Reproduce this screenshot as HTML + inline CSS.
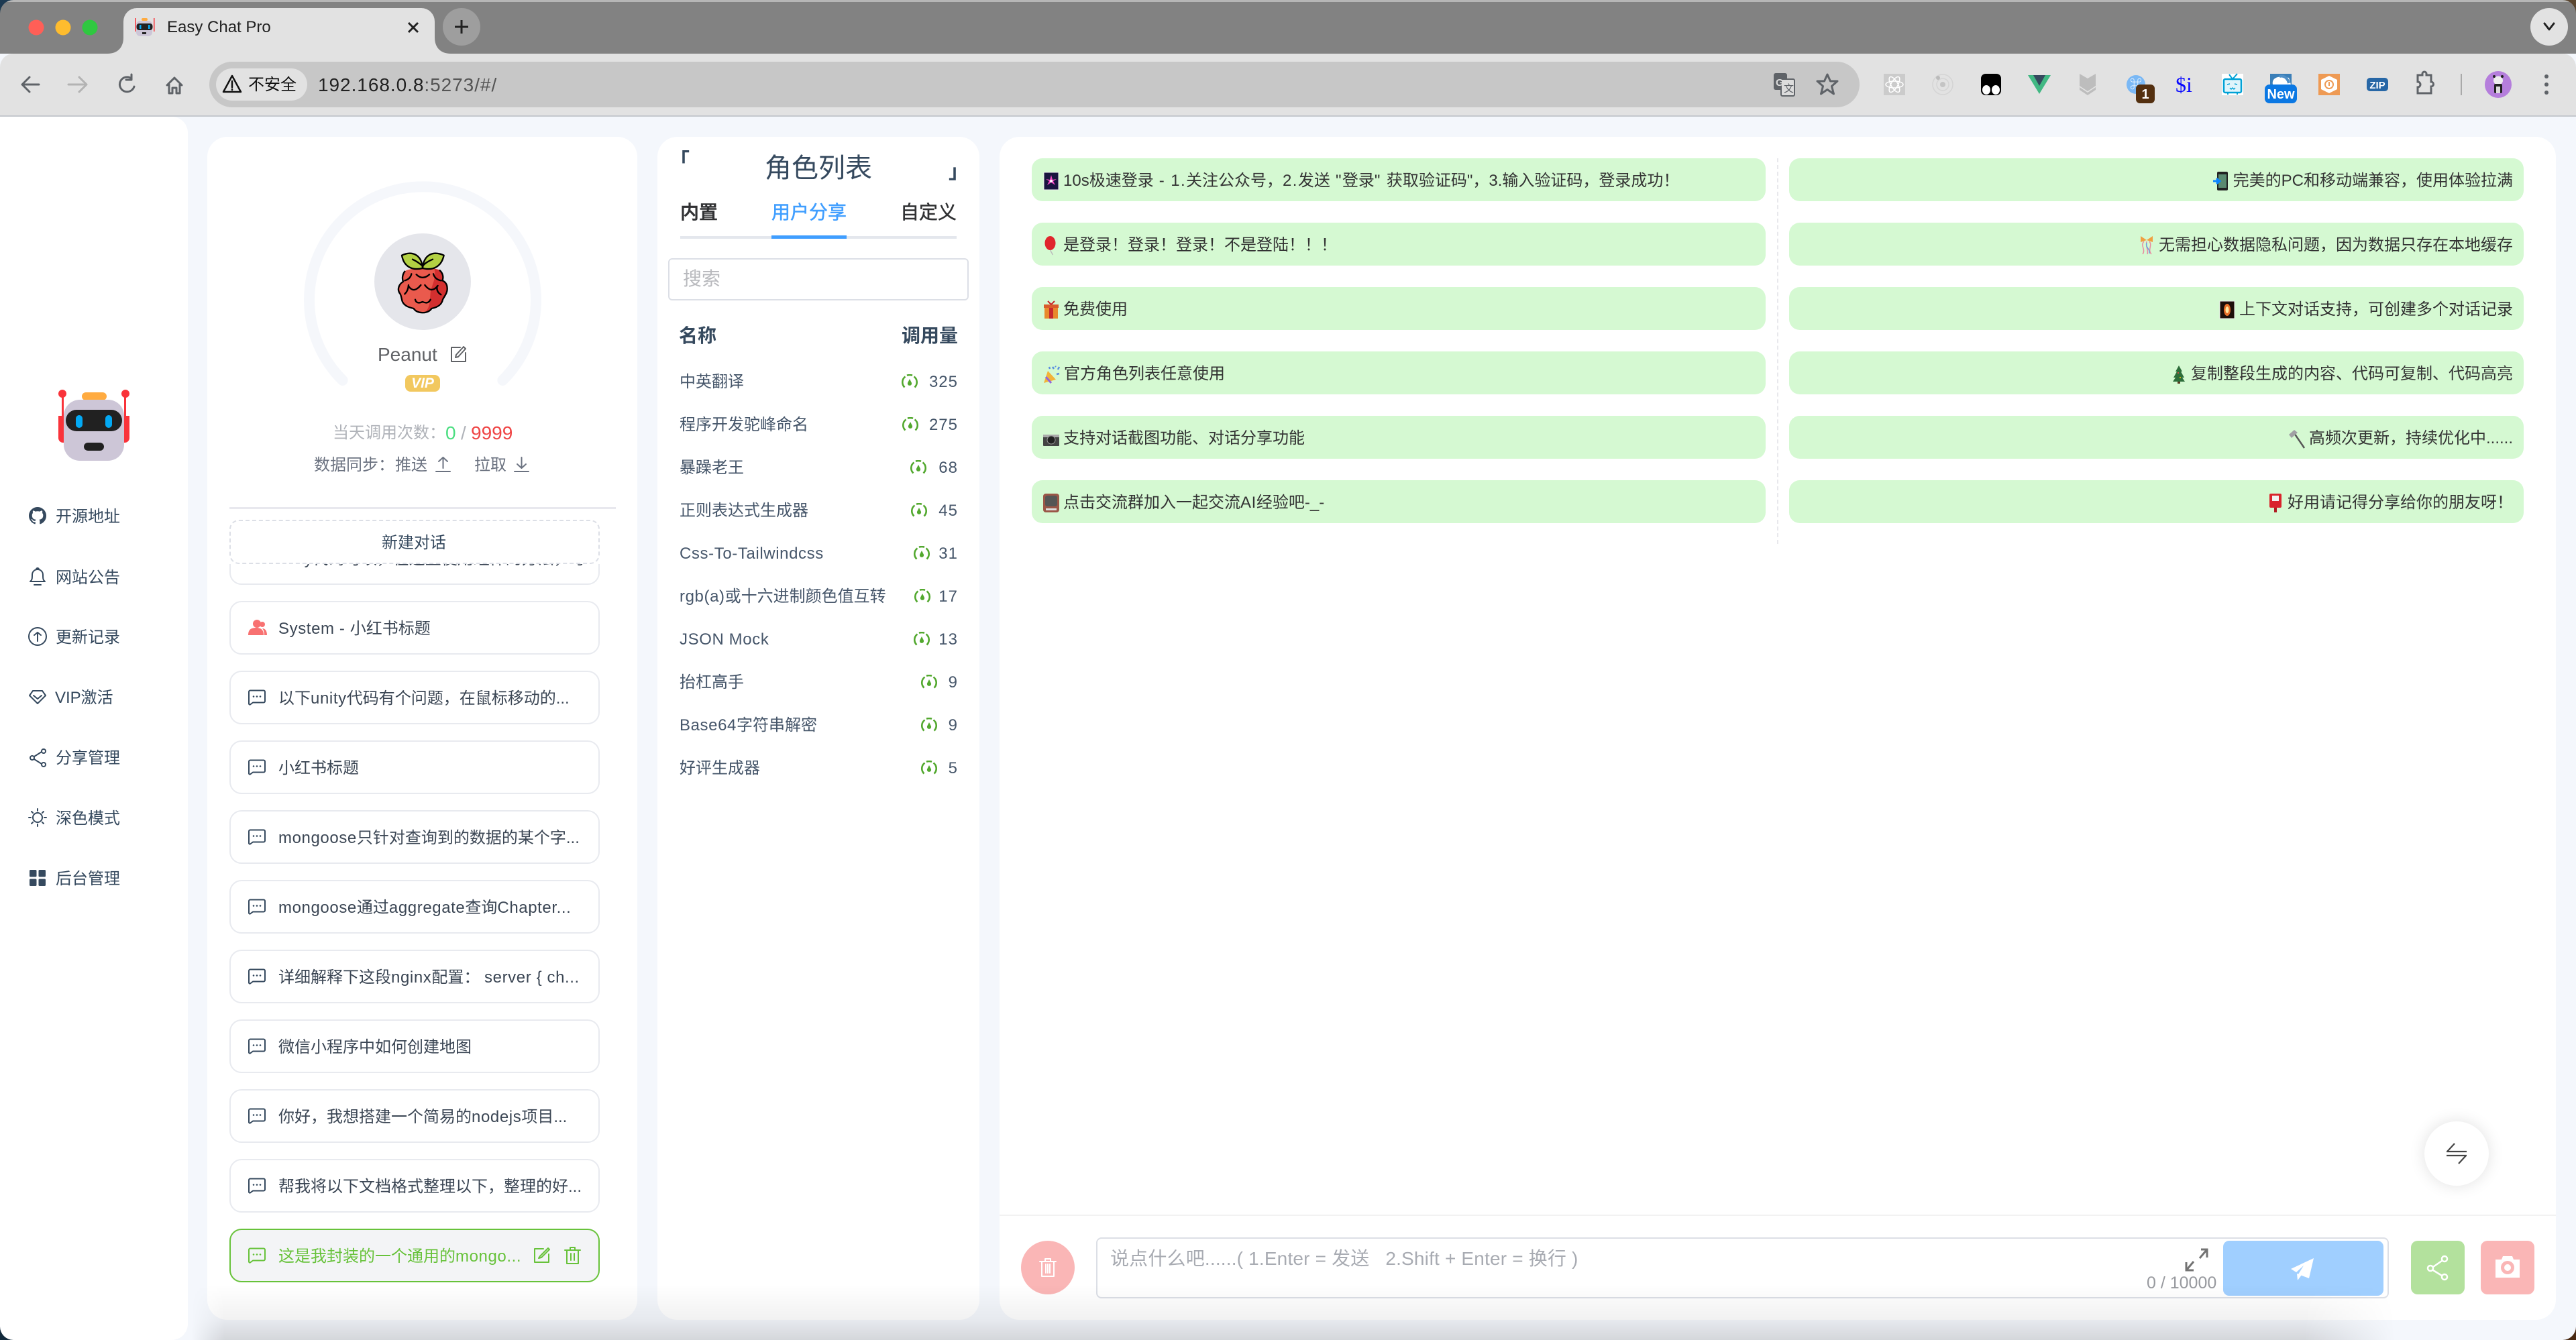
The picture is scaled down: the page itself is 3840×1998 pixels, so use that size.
<!DOCTYPE html>
<html lang="zh-CN"><head><meta charset="utf-8"><title>Easy Chat Pro</title>
<style>
*{box-sizing:border-box;margin:0;padding:0}
html,body{width:3840px;height:1998px;overflow:hidden;background:#f4f7fc;font-family:"Liberation Sans","Noto Sans CJK SC",sans-serif;color:#35495e}
.a{position:absolute}
.t{position:absolute;white-space:pre;line-height:40px;height:40px;padding-top:2px}
svg{display:block;overflow:visible}
.i{position:absolute;fill:none;stroke:currentColor;stroke-width:2;stroke-linecap:round;stroke-linejoin:round}
.nav{font-size:24px;color:#35495e;left:83px}
.e{letter-spacing:.6px}
.item{position:absolute;left:342px;width:552px;height:80px;border:2px solid #e8eaef;border-radius:18px;background:#fff;font-size:24px;color:#3b4654;line-height:80px;white-space:pre;padding-left:71px}
.item svg{position:absolute;left:26px;top:26px;color:#35495e}
.item.on{border-color:#67c23a;background:#f3f4f6;color:#67c23a}
.item.on svg{color:#67c23a}
.row{position:absolute;left:1013px;width:414px;height:40px;line-height:44px;font-size:24px;color:#46566a;white-space:pre}
.row b{position:absolute;right:-1px;top:0;font-weight:400;letter-spacing:1px}
.row svg{position:absolute;top:10px}
.n{position:absolute;height:64px;border-radius:16px;background:#d5f9d2;font-size:24px;color:#333;line-height:60px;padding-top:4px;white-space:pre;display:flex;align-items:center}
.l{left:1538px;width:1094px;padding-left:17px}
.r{left:2667px;width:1095px;justify-content:flex-end;padding-right:16px}
.n svg{flex:none;margin-right:6px}
.q{letter-spacing:1.4px}
</style></head><body>

<svg width="0" height="0" style="position:absolute"><defs>
<symbol id="chat" viewBox="0 0 26 24"><path d="M3 1.5h20a2 2 0 0 1 2 2v14a2 2 0 0 1-2 2H7l-4 3a1.5 1.5 0 0 1-2-1V3.5a2 2 0 0 1 2-2z" fill="none" stroke="currentColor" stroke-width="2" stroke-linejoin="round"/><circle cx="8" cy="10.5" r="1.3" fill="currentColor"/><circle cx="13" cy="10.5" r="1.3" fill="currentColor"/><circle cx="18" cy="10.5" r="1.3" fill="currentColor"/></symbol>
<symbol id="gauge" viewBox="0 0 24 21"><g fill="none" stroke="#52a82e" stroke-width="2.6"><path d="M4.500 19.500A10.500 10.500 0 0 1 5.500 3.500"/><path d="M19.500 19.500A10.500 10.500 0 0 0 18.500 3.500"/><path d="M8 1.800a11 11 0 0 1 8 0"/></g><path d="M12 7l2.800 5.500a3.100 3.100 0 1 1-5.600 0z" fill="#52a82e"/></symbol>
</defs></svg>

<!-- Browser chrome -->
<div class="a" style="left:0;top:0;width:3840px;height:80px;background:#828282"></div>
<div class="a" style="left:0;top:0;width:3840px;height:3px;background:#b6b6b6"></div>
<div class="a" style="left:0;top:80px;width:3840px;height:92px;background:#e2e2e2;border-radius:20px 20px 0 0"></div>
<div class="a" style="left:0;top:172px;width:3840px;height:2px;background:#c4c8cd"></div>
<svg class="a" style="left:0;top:0" width="800" height="90"><path d="M160 80C176 80 184 70 184 56V32A20 20 0 0 1 204 12H628A20 20 0 0 1 648 32V56C648 70 656 80 672 80V90H160Z" fill="#e2e2e2"/>
<circle cx="54" cy="41" r="11.5" fill="#ff5f57"/><circle cx="94" cy="41" r="11.5" fill="#febc2e"/><circle cx="134" cy="41" r="11.5" fill="#2fc840"/>
<circle cx="688" cy="40" r="28" fill="#9e9e9e"/><path d="M678 40h20M688 30v20" stroke="#222" stroke-width="3"/>
<path d="M609 34l14 14M623 34l-14 14" stroke="#222" stroke-width="3"/>
<g><rect x="203" y="31" width="24" height="23" rx="6" fill="#cdc6d7"/><rect x="211" y="27" width="9" height="4" rx="2" fill="#ffab40"/><rect x="203.500" y="35" width="24" height="10" rx="4" fill="#212121"/><rect x="208" y="37" width="2.500" height="6" fill="#03a9f4"/><rect x="221" y="37" width="2.500" height="6" fill="#03a9f4"/><rect x="212" y="48" width="6" height="3" fill="#222"/><rect x="201" y="27" width="1.500" height="20" fill="#f9333a"/><rect x="229" y="27" width="1.500" height="20" fill="#f9333a"/></g></svg>
<div class="t" style="left:249px;top:19px;font-size:24px;color:#222">Easy Chat Pro</div>

<svg class="a i" style="left:30px;top:108px;color:#5f6368;stroke-width:3" width="270" height="40"><path d="M4 18H28M14 7L3 18l11 11"/><path d="M72 18H98M88 7l11 11-11 11" stroke="#b3b3b3"/><path d="M166 9a11 11 0 1 0 4 12M166 3v8h-8"/><path d="M219 19l11-11 11 11M222 17v14h5v-8h6v8h5V17"/></svg>
<div class="a" style="left:312px;top:92px;width:2460px;height:68px;border-radius:34px;background:#c7c7c7"></div>
<div class="a" style="left:322px;top:102px;width:136px;height:48px;border-radius:24px;background:#e2e2e2"></div>
<svg class="a i" style="left:331px;top:110px;color:#111;stroke-width:2.500" width="30" height="30"><path d="M15 3L28 27H2Z"/><path d="M15 11v9M15 23v1"/></svg>
<div class="t" style="left:370px;top:105px;font-size:24px;color:#111">不安全</div>
<div class="t" style="left:474px;top:105px;font-size:28px;letter-spacing:.95px;color:#222">192.168.0.8<span style="color:#555">:5273/#/</span></div>

<svg class="a" style="left:2640px;top:104px" width="110" height="44"><rect x="4" y="5" width="20" height="25" rx="3" fill="#5f6368"/><rect x="15" y="14" width="20" height="25" rx="2" fill="#dcdcdc" stroke="#5f6368" stroke-width="2"/><text x="7" y="24" font-size="15" font-weight="700" fill="#ddd" font-family="Liberation Sans">G</text><text x="19" y="33" font-size="15" fill="#5f6368" font-family="Liberation Sans">文</text><path d="M84 7l4.500 10h10.500l-8.500 7.500 3 11.500-9.500-6.500-9.500 6.500 3-11.500L69 17h10.500Z" fill="#c6c6c6" stroke="#5f6368" stroke-width="3" stroke-linejoin="round"/></svg>

<svg class="a" style="left:2800px;top:100px" width="1030" height="60">
<rect x="8" y="10" width="32" height="32" fill="#cbcbcb"/><g fill="none" stroke="#fff" stroke-width="1.500"><ellipse cx="24" cy="26" rx="13" ry="5"/><ellipse cx="24" cy="26" rx="13" ry="5" transform="rotate(60 24 26)"/><ellipse cx="24" cy="26" rx="13" ry="5" transform="rotate(120 24 26)"/></g>
<g fill="none" stroke="#d4d4d4" stroke-width="1.500"><circle cx="96" cy="26" r="15"/><circle cx="96" cy="26" r="9"/></g><circle cx="96" cy="26" r="4" fill="#c4c4c4"/><circle cx="89" cy="16" r="3" fill="#bbb"/>
<rect x="153" y="10" width="30" height="32" rx="7" fill="#000"/><ellipse cx="161" cy="34" rx="6" ry="7" fill="#fff"/><ellipse cx="175" cy="34" rx="6" ry="7" fill="#fff"/>
<path d="M223 12h34l-17 28Z" fill="#41b883"/><path d="M231 12h18l-9 16Z" fill="#35495e"/>
<path d="M300 10l12 7 12-7v18l-12 8-12-8Z" fill="#bdbdbd"/><path d="M300 30l12 8 12-8v4l-12 8-12-8Z" fill="#bdbdbd"/>
<circle cx="384" cy="26" r="14" fill="#7ab8f5"/><text x="375" y="32" font-size="18" fill="#fff" font-family="Liberation Sans">⌘</text>
<rect x="384" y="26" width="28" height="28" rx="6" fill="#532f0f"/><text x="398" y="47" text-anchor="middle" font-size="20" font-weight="700" fill="#fff" font-family="Liberation Sans">1</text>
<text x="443" y="37" font-size="32" fill="#0a0aff" font-family="Liberation Serif">$i</text>
<rect x="512" y="10" width="32" height="32" fill="#fff"/><rect x="515" y="18" width="26" height="20" rx="2" fill="#dff4fb" stroke="#00a1d6" stroke-width="2.500"/><path d="M523 11l5 7 7-8M520 40h2M534 40h2" stroke="#00a1d6" stroke-width="2" fill="none"/><path d="M520 26l4-1M535 26l-4-1M524 31l2 2 2-2 2 2 2-2" stroke="#00a1d6" stroke-width="1.500" fill="none"/>
<rect x="584" y="10" width="32" height="18" fill="#3b7fb8"/><path d="M588 26c-2-10 8-14 24-10l3 10Z" fill="#fff"/><path d="M598 14c6-2 12 2 14 10" stroke="#4f8fc7" stroke-width="4" fill="none"/>
<rect x="576" y="26" width="48" height="28" rx="7" fill="#0b78e3"/><text x="600" y="47" text-anchor="middle" font-size="20" font-weight="700" fill="#fff" font-family="Liberation Sans">New</text>
<rect x="656" y="10" width="32" height="32" fill="#ee9a54"/><path d="M672 13l12 6v14l-12 6-12-6V19Z" fill="#fff"/><circle cx="672" cy="26" r="6" fill="none" stroke="#ee9a54" stroke-width="2"/><path d="M672 22v6" stroke="#ee9a54" stroke-width="2"/>
<rect x="728" y="16" width="32" height="20" rx="5" fill="#2767a6"/><text x="744" y="32" text-anchor="middle" font-size="15" font-weight="700" fill="#fff" font-family="Liberation Sans">ZIP</text>
<path d="M804 12h7v-2a3 3 0 0 1 6 0v2h7v10a3.500 3.500 0 0 1 0 7v10h-20v-9a3.500 3.500 0 0 0 0-8Z" fill="none" stroke="#5f6368" stroke-width="3"/>
<rect x="868" y="10" width="2" height="32" fill="#a9a9a9"/>
<circle cx="924" cy="26" r="20" fill="#b57edc"/><ellipse cx="924" cy="20" rx="7" ry="6.500" fill="#eee"/><circle cx="918" cy="14" r="2" fill="#222"/><circle cx="930" cy="14" r="2" fill="#222"/><rect x="918" y="25" width="12" height="14" rx="2" fill="#222"/><rect x="921" y="29" width="6" height="10" fill="#ddd"/>
<circle cx="996" cy="14" r="3" fill="#5f6368"/><circle cx="996" cy="26" r="3" fill="#5f6368"/><circle cx="996" cy="38" r="3" fill="#5f6368"/>
</svg>
<div class="a" style="left:3772px;top:12px;width:56px;height:56px;border-radius:28px;background:#e2e2e2"></div>
<svg class="a i" style="left:3790px;top:32px;color:#222;stroke-width:3" width="20" height="16"><path d="M3 3l7 9 7-9"/></svg>

<!-- Left nav -->
<div class="a" style="left:0;top:174px;width:280px;height:1824px;background:#fff;border-radius:0 24px 24px 0"></div>
<svg class="a" style="left:80px;top:575px" width="120" height="120">
<path d="M7 45h8v40H14a7 7 0 0 1-7-7ZM113 45h-8v40h1a7 7 0 0 0 7-7Z" fill="#f9333a"/><rect x="12" y="10" width="3" height="40" fill="#f9333a"/><rect x="105" y="10" width="3" height="40" fill="#f9333a"/><circle cx="13" cy="12" r="6" fill="#f9333a"/><circle cx="107" cy="12" r="6" fill="#f9333a"/>
<rect x="42" y="10" width="37" height="12" rx="6" fill="#ffab40"/><rect x="15" y="21" width="90" height="91" rx="24" fill="#cdc6d7"/><rect x="18" y="36" width="84" height="32" rx="16" fill="#212121"/><rect x="33" y="44" width="10" height="19" rx="5" fill="#03a9f4"/><rect x="77" y="44" width="10" height="19" rx="5" fill="#03a9f4"/><rect x="45" y="85" width="30" height="12" rx="6" fill="#212121"/></svg>

<svg class="a" style="left:43px;top:756px;color:#35495e;fill:currentColor" width="26" height="26" viewBox="0 0 16 16"><path d="M8 0C3.58 0 0 3.58 0 8c0 3.54 2.29 6.53 5.47 7.59.4.07.55-.17.55-.38 0-.19-.01-.82-.01-1.49-2.01.37-2.53-.49-2.69-.94-.09-.23-.48-.94-.82-1.13-.28-.15-.68-.52-.01-.53.63-.01 1.08.58 1.23.82.72 1.21 1.87.87 2.33.66.07-.52.28-.87.51-1.07-1.78-.2-3.64-.89-3.64-3.95 0-.87.31-1.59.82-2.15-.08-.2-.36-1.02.08-2.12 0 0 .67-.21 2.2.82.64-.18 1.32-.27 2-.27.68 0 1.36.09 2 .27 1.53-1.04 2.2-.82 2.2-.82.44 1.1.16 1.92.08 2.12.51.56.82 1.27.82 2.15 0 3.07-1.87 3.75-3.65 3.95.29.25.54.73.54 1.48 0 1.07-.01 1.93-.01 2.2 0 .21.15.46.55.38A8.013 8.013 0 0 0 16 8c0-4.42-3.58-8-8-8z"/></svg>
<div class="t nav" style="top:749px">开源地址</div>
<svg class="i" style="left:43px;top:846px;color:#35495e" width="26" height="28"><path d="M2 21c3-2 3-5 3-10a8 8 0 0 1 16 0c0 5 0 8 3 10ZM11 3a2 2 0 0 1 4 0M8 26h10"/></svg>
<div class="t nav" style="top:840px">网站公告</div>
<svg class="i" style="left:42px;top:936px;color:#35495e" width="28" height="26"><circle cx="14" cy="13" r="13"/><path d="M14 20V7M9 11l5-4 5 4"/></svg>
<div class="t nav" style="top:929px">更新记录</div>
<svg class="i" style="left:43px;top:1029px;color:#35495e" width="26" height="22"><path d="M6 1h14l5 7-12 12L1 8ZM7 8l6 5 6-5"/></svg>
<div class="t nav" style="top:1019px;left:82px">VIP激活</div>
<svg class="i" style="left:44px;top:1116px;color:#35495e" width="26" height="28"><circle cx="4" cy="14" r="3"/><circle cx="21" cy="4" r="3"/><circle cx="21" cy="24" r="3"/><path d="M7 12l11-7M7 16l11 7"/></svg>
<div class="t nav" style="top:1109px">分享管理</div>
<svg class="i" style="left:42px;top:1205px;color:#35495e" width="28" height="28"><circle cx="14" cy="14" r="7"/><path d="M14 1v3M14 24v3M1 14h3M24 14h3M5 5l2 2M21 21l2 2M5 23l2-2M21 7l2-2"/></svg>
<div class="t nav" style="top:1199px">深色模式</div>
<svg class="a" style="left:44px;top:1297px" width="24" height="24" fill="#35495e"><rect width="10.500" height="10.500" rx="1.500"/><rect x="13.500" width="10.500" height="10.500" rx="1.500"/><rect y="13.500" width="10.500" height="10.500" rx="1.500"/><rect x="13.500" y="13.500" width="10.500" height="10.500" rx="1.500"/></svg>
<div class="t nav" style="top:1289px">后台管理</div>

<!-- Left card -->
<div class="a" style="left:309px;top:204px;width:641px;height:1764px;background:#fff;border-radius:30px"></div>
<svg class="a" style="left:400px;top:250px" width="460" height="360" viewBox="0 0 1380 1080">
<path d="M332 951A507 507 0 1 1 1048 951" fill="none" stroke="#f5f7fb" stroke-width="48" stroke-linecap="round"/>
<circle cx="690" cy="510" r="216" fill="#e5e6eb"/>
<clipPath id="rb"><path d="M612 462C600 475 597 495 603 510C585 520 573 545 590 565C595 575 596 590 600 600C610 620 630 625 650 630C665 655 715 655 730 630C755 625 775 615 780 590C785 578 802 560 800 540C800 520 790 510 778 505C785 490 780 470 765 458C740 445 640 445 612 462Z"/></clipPath>
<path d="M612 462C600 475 597 495 603 510C585 520 573 545 590 565C595 575 596 590 600 600C610 620 630 625 650 630C665 655 715 655 730 630C755 625 775 615 780 590C785 578 802 560 800 540C800 520 790 510 778 505C785 490 780 470 765 458C740 445 640 445 612 462Z" fill="#ea5a4d"/>
<path d="M740 440C755 500 730 520 725 560C722 600 725 620 700 650H810V440Z" fill="#d32f2f" clip-path="url(#rb)"/>
<path d="M612 462C600 475 597 495 603 510C585 520 573 545 590 565C595 575 596 590 600 600C610 620 630 625 650 630C665 655 715 655 730 630C755 625 775 615 780 590C785 578 802 560 800 540C800 520 790 510 778 505C785 490 780 470 765 458" fill="none" stroke="#000" stroke-width="7"/>
<g fill="none" stroke="#000" stroke-width="7" stroke-linecap="round"><path d="M662 478Q690 505 720 478M610 505Q635 498 640 475M738 475Q745 500 772 505M627 525Q625 552 610 565M627 530Q650 565 682 525M700 525Q730 565 758 528M755 530Q750 555 772 568M657 590Q662 612 690 600Q715 612 725 590"/></g>
<path d="M690 450C640 462 605 440 597 392C640 372 685 385 690 450Z" fill="#b3d143" stroke="#000" stroke-width="7" stroke-linejoin="round"/><path d="M690 450C740 462 775 440 785 392C740 372 695 385 690 450Z" fill="#b3d143" stroke="#000" stroke-width="7" stroke-linejoin="round"/>
<path d="M645 410Q670 422 690 440M735 410Q705 422 690 440" fill="none" stroke="#000" stroke-width="7" stroke-linecap="round"/>
</svg>
<div class="t" style="left:563px;top:507px;font-size:28px;color:#606266">Peanut</div>
<svg class="i" style="left:671px;top:515px;color:#606266" width="26" height="26"><path d="M15 3H2v21h21V11M9 14L20 2l3 3-11 12-4 1Z"/></svg>
<div class="a" style="left:604px;top:559px;width:52px;height:25px;border-radius:8px;background:#f2c85f;color:#fff;font:italic 700 21px/25px 'Liberation Sans';text-align:center">VIP</div>

<div class="t" style="left:496px;top:624px;font-size:24px;color:#b0b3b9">当天调用次数：</div>
<div class="t" style="left:664px;top:624px;font-size:28px;color:#4ade80">0</div>
<div class="t" style="left:687px;top:624px;font-size:28px;color:#b0b3b9">/</div>
<div class="t" style="left:702px;top:624px;font-size:28px;color:#ef4444">9999</div>
<div class="t" style="left:468px;top:672px;font-size:24px;color:#6b7280">数据同步：</div>
<div class="t" style="left:589px;top:672px;font-size:24px;color:#6b7280">推送</div>
<div class="t" style="left:707px;top:672px;font-size:24px;color:#6b7280">拉取</div>
<svg class="i" style="left:649px;top:680px;color:#6b7280" width="24" height="24"><path d="M1 23h21M11.500 18V2M5 8l6.500-6L18 8"/></svg>
<svg class="i" style="left:766px;top:680px;color:#6b7280" width="24" height="24"><path d="M1 23h21M11.500 2v16M5 12l6.500 6L18 12"/></svg>
<div class="a" style="left:342px;top:756px;width:576px;height:3px;background:#e8e8ee"></div>

<div class="a" style="left:309px;top:841px;width:641px;height:40px;overflow:hidden"><div class="item" style="left:33px;top:-49px">unity代码可以，在这里使用组件的方法，写...</div></div>
<div class="a" style="left:342px;top:775px;width:552px;height:66px;border:2px dashed #dcdfe6;border-radius:14px;background:#fff;text-align:center;font-size:24px;line-height:66px;color:#35495e;padding-right:2px">新建对话</div>

<div class="item" style="top:896px"><svg width="28" height="24" class="a" style="left:26px;top:26px" fill="#f87171"><circle cx="13" cy="6" r="6"/><circle cx="21" cy="7" r="4"/><path d="M0 23c0-9 5-11 12-11s11 3 11 11Z"/><path d="M21 13c4 0 7 3 7 10h-4c0-4-1-8-3-10Z"/></svg><span class="e">System - </span>小红书标题</div>
<div class="item" style="top:1000px"><svg width="26" height="24"><use href="#chat"/></svg>以下<span class="e">unity</span>代码有个问题，在鼠标移动的...</div>
<div class="item" style="top:1104px"><svg width="26" height="24"><use href="#chat"/></svg>小红书标题</div>
<div class="item" style="top:1208px"><svg width="26" height="24"><use href="#chat"/></svg><span class="e">mongoose</span>只针对查询到的数据的某个字...</div>
<div class="item" style="top:1312px"><svg width="26" height="24"><use href="#chat"/></svg><span class="e">mongoose</span>通过<span class="e">aggregate</span>查询<span class="e">Chapter...</span></div>
<div class="item" style="top:1416px"><svg width="26" height="24"><use href="#chat"/></svg>详细解释下这段<span class="e">nginx</span>配置： <span class="e">server { ch...</span></div>
<div class="item" style="top:1520px"><svg width="26" height="24"><use href="#chat"/></svg>微信小程序中如何创建地图</div>
<div class="item" style="top:1624px"><svg width="26" height="24"><use href="#chat"/></svg>你好，我想搭建一个简易的<span class="e">nodejs</span>项目...</div>
<div class="item" style="top:1728px"><svg width="26" height="24"><use href="#chat"/></svg>帮我将以下文档格式整理以下，整理的好...</div>
<div class="item on" style="top:1832px"><svg width="26" height="24"><use href="#chat"/></svg>这是我封装的一个通用的<span class="e">mongo...</span>
<svg class="i" style="left:451px;top:25px;color:#67c23a;stroke-width:2" width="26" height="26"><path d="M15 3H2v20h21V11M10 14L22 2l2 2-12 12-4 1Z"/></svg>
<svg class="i" style="left:497px;top:25px;color:#67c23a;stroke-width:2" width="26" height="26"><path d="M1 5h23M4 5v20h17V5M9 5V1h7v4M10 10v10M15 10v10"/></svg></div>

<!-- Middle card -->
<div class="a" style="left:980px;top:204px;width:480px;height:1764px;background:#fff;border-radius:30px"></div>
<div class="t" style="left:998px;top:219px;font-size:30px;line-height:40px;color:#35495e;font-weight:700">「</div>
<div class="t" style="left:1414px;top:235px;font-size:30px;line-height:40px;color:#35495e;font-weight:700">」</div>
<div class="t" style="left:1140px;top:225px;font-size:40px;line-height:48px;height:48px;color:#35495e">角色列表</div>
<div class="t" style="left:1014px;top:295px;font-size:28px;font-weight:500;color:#303133;-webkit-text-stroke:.5px #303133">内置</div>
<div class="t" style="left:1150px;top:295px;font-size:28px;color:#409eff;-webkit-text-stroke:.5px #409eff">用户分享</div>
<div class="t" style="left:1342px;top:295px;font-size:28px;color:#303133;-webkit-text-stroke:.5px #303133">自定义</div>
<div class="a" style="left:1014px;top:352px;width:412px;height:4px;background:#e4e7ed"></div>
<div class="a" style="left:1150px;top:351px;width:112px;height:5px;background:#409eff"></div>
<div class="a" style="left:996px;top:385px;width:448px;height:63px;border:2px solid #dcdfe6;border-radius:6px;background:#fff"></div>
<div class="t" style="left:1018px;top:394px;font-size:28px;color:#b8b9bd">搜索</div>
<div class="t" style="left:1012px;top:479px;font-size:28px;font-weight:700;color:#35495e">名称</div>
<div class="t" style="left:1344px;top:479px;font-size:28px;font-weight:700;color:#35495e">调用量</div>

<div class="row" style="top:548px">中英翻译<svg width="24" height="21" style="left:331px"><use href="#gauge"/></svg><b>325</b></div>
<div class="row" style="top:612px">程序开发驼峰命名<svg width="24" height="21" style="left:332px"><use href="#gauge"/></svg><b>275</b></div>
<div class="row" style="top:676px">暴躁老王<svg width="24" height="21" style="left:344px"><use href="#gauge"/></svg><b>68</b></div>
<div class="row" style="top:740px">正则表达式生成器<svg width="24" height="21" style="left:345px"><use href="#gauge"/></svg><b>45</b></div>
<div class="row" style="top:804px"><span class="e">Css-To-Tailwindcss</span><svg width="24" height="21" style="left:349px"><use href="#gauge"/></svg><b>31</b></div>
<div class="row" style="top:868px"><span class="e">rgb(a)</span>或十六进制颜色值互转<svg width="24" height="21" style="left:350px"><use href="#gauge"/></svg><b>17</b></div>
<div class="row" style="top:932px"><span class="e">JSON Mock</span><svg width="24" height="21" style="left:349px"><use href="#gauge"/></svg><b>13</b></div>
<div class="row" style="top:996px">抬杠高手<svg width="24" height="21" style="left:360px"><use href="#gauge"/></svg><b>9</b></div>
<div class="row" style="top:1060px"><span class="e">Base64</span>字符串解密<svg width="24" height="21" style="left:360px"><use href="#gauge"/></svg><b>9</b></div>
<div class="row" style="top:1124px">好评生成器<svg width="24" height="21" style="left:360px"><use href="#gauge"/></svg><b>5</b></div>

<!-- Right card -->
<div class="a" style="left:1490px;top:204px;width:2320px;height:1764px;background:#fff;border-radius:30px"></div>
<div class="a" style="left:2649px;top:236px;height:575px;border-left:2px dashed #e8e8ec"></div>

<div class="n l" style="top:236px"><svg width="24" height="28"><rect x="1" y="1" width="22" height="26" fill="#1a1440" stroke="#eee"/><path d="M12 5l2 7 6-1-5 3 3 6-6-4-6 4 3-6-5-3 6 1Z" fill="#f24ac4"/><circle cx="12" cy="14" r="2" fill="#fff"/></svg><span>10s极速登录<span class="q"> - 1.</span>关注公众号，<span class="q">2.</span>发送<span class="q"> "</span>登录<span class="q">" </span>获取验证码"，3.输入验证码，登录成功！</span></div>
<div class="n l" style="top:332px"><svg width="24" height="28"><ellipse cx="10.500" cy="10.500" rx="8" ry="10.500" fill="#e0252c"/><path d="M10.500 21l4 7" stroke="#bbb" stroke-width="1.500"/></svg>是登录！登录！登录！不是登陆！！！</div>
<div class="n l" style="top:428px"><svg width="24" height="28"><rect x="2" y="8" width="20" height="19" fill="#e8892c"/><rect x="9" y="8" width="6" height="19" fill="#c7282d"/><rect x="1" y="6" width="22" height="5" fill="#d95b2b"/><path d="M12 6L7 1M12 6l5-5" stroke="#c7282d" stroke-width="2"/></svg>免费使用</div>
<div class="n l" style="top:524px"><svg width="24" height="28" style="margin-right:7px"><path d="M1 27l6-18 12 13Z" fill="#f2b33a"/><path d="M4 18l8 9" stroke="#9467d8" stroke-width="3"/><path d="M14 3l2 3M22 7l2-4M20 14l4-1M18 2l1 1M9 3l1 3" stroke="#5a8fe0" stroke-width="2.500"/></svg>官方角色列表任意使用</div>
<div class="n l" style="top:620px"><svg width="24" height="28"><rect x="0" y="8" width="24" height="17" rx="1" fill="#444"/><rect x="0" y="8" width="24" height="4" fill="#aaa"/><circle cx="12" cy="16" r="6" fill="#222" stroke="#999"/></svg>支持对话截图功能、对话分享功能</div>
<div class="n l" style="top:716px"><svg width="24" height="28"><rect x="0" y="0" width="24" height="28" rx="4" fill="#9a5647"/><rect x="3" y="3" width="18" height="16" rx="3" fill="#555"/><rect x="4" y="22" width="16" height="3" fill="#ddd"/></svg>点击交流群加入一起交流<span class="e">AI</span>经验吧-_-</div>

<div class="n r" style="top:236px"><svg width="24" height="28"><rect x="6" y="0" width="16" height="28" rx="2" fill="#222"/><rect x="8" y="4" width="12" height="20" fill="#5a8a70"/><path d="M0 14h8M5 10l5 4-5 4" stroke="#0a84ff" stroke-width="3" fill="#0a84ff"/></svg>完美的PC和移动端兼容，使用体验拉满</div>
<div class="n r" style="top:332px"><svg width="24" height="28"><path d="M12 6L3 0v9ZM12 6l9-6v9Z" fill="#f0a040"/><path d="M8 8c-6 6 3 12-2 19M12 8c-2 8 3 12 1 19M16 8c5 6-3 12 3 19" stroke="#e88aa0" stroke-width="1.500" fill="none"/><path d="M12 10c-2 8 5 8 4 16" stroke="#6aa0e0" stroke-width="1.500" fill="none"/></svg>无需担心数据隐私问题，因为数据只存在本地缓存</div>
<div class="n r" style="top:428px"><svg width="24" height="28"><rect x="1" y="1" width="22" height="26" fill="#1e0f0a" stroke="#eee"/><ellipse cx="12" cy="14" rx="5" ry="9" fill="#e8702a"/><ellipse cx="12" cy="14" rx="2.500" ry="5" fill="#ffe7a0"/></svg>上下文对话支持，可创建多个对话记录</div>
<div class="n r" style="top:524px"><svg width="24" height="28"><path d="M12 1l5 9h-2l5 9h-3l4 6H3l4-6H4l5-9H7Z" fill="#2d6e3a"/><rect x="10" y="25" width="4" height="3" fill="#5a3a20"/><circle cx="11" cy="12" r="1" fill="#f44"/><circle cx="14" cy="19" r="1" fill="#fc0"/></svg>复制整段生成的内容、代码可复制、代码高亮</div>
<div class="n r" style="top:620px"><svg width="26" height="28" style="margin-right:6px"><path d="M10 6l15 22" stroke="#555" stroke-width="2.500"/><path d="M2 8l8-7 5 4-9 8Z" fill="#a0a0a4"/></svg>高频次更新，持续优化中......</div>
<div class="n r" style="top:716px"><svg width="22" height="28" style="margin-right:6px"><rect x="1" y="0" width="18" height="21" rx="2" fill="#d9242c"/><rect x="5" y="3" width="10" height="8" fill="#f2f2f2"/><rect x="8" y="21" width="4" height="7" fill="#b01c22"/></svg>好用请记得分享给你的朋友呀！</div>

<!-- Bottom input -->
<div class="a" style="left:1490px;top:1811px;width:2320px;height:2px;background:#f2f2f2"></div>
<div class="a" style="left:1522px;top:1850px;width:80px;height:80px;border-radius:50%;background:#fab6b6"></div>
<svg class="i" style="left:1549px;top:1876px;color:#fff;stroke-width:2" width="26" height="28"><path d="M1 5h24M4 5v22h18V5M9 5V1h8v4M10 9v13M13 9v13M16 9v13"/></svg>
<div class="a" style="left:1634px;top:1845px;width:1927px;height:91px;border:2px solid #dcdfe6;border-radius:8px;background:#fff"></div>
<div class="t" style="left:1655px;top:1855px;font-size:28px;letter-spacing:.18px;color:#a8abb2">说点什么吧......( 1.Enter = 发送   2.Shift + Enter = 换行 )</div>
<svg class="a" style="left:3256px;top:1860px;fill:none;stroke:#737373;stroke-width:3" width="36" height="36"><path d="M25 3h9v12M34 3L23 16"/><path d="M3 22v12h11M3 34l11-13"/></svg>
<div class="t" style="left:3200px;top:1891px;font-size:25px;color:#97999e">0 / 10000</div>
<div class="a" style="left:3314px;top:1850px;width:239px;height:82px;border-radius:9px;background:#a0cfff"></div>
<svg class="a" style="left:3414px;top:1874px" width="36" height="36" fill="#fff"><path d="M35 2L1 18l8 5 11-10-8 13 16 6Z"/><path d="M10 25l1 10 6-8Z"/></svg>
<div class="a" style="left:3594px;top:1850px;width:80px;height:80px;border-radius:10px;background:#b3e19d"></div>
<svg class="i" style="left:3618px;top:1871px;color:#fff;stroke-width:2.500" width="34" height="38"><circle cx="26" cy="6" r="4"/><circle cx="5" cy="20" r="4"/><circle cx="26" cy="33" r="4"/><path d="M22 9L9 18M9 23l13 8"/></svg>
<div class="a" style="left:3698px;top:1850px;width:80px;height:80px;border-radius:10px;background:#fab6b6"></div>
<svg class="a" style="left:3720px;top:1872px" width="36" height="34"><path d="M0 6h9l2-5h14l2 5h9v27H0Z" fill="#fff"/><circle cx="18" cy="18" r="10" fill="#fab6b6"/><circle cx="18" cy="18" r="5" fill="#fff"/></svg>

<div class="a" style="left:3614px;top:1672px;width:96px;height:96px;border-radius:50%;background:#fff;box-shadow:0 0 24px rgba(0,0,0,.12)"></div>
<svg class="a" style="left:3646px;top:1704px" width="32" height="32" stroke="#444" stroke-width="2.200" fill="none"><path d="M1 13H31M2 13L13 1M31 19H1M30 19L19 31"/></svg>

<!-- bottom shadow -->
<div class="a" style="left:285px;top:1880px;width:3285px;height:118px;background:linear-gradient(180deg,rgba(0,0,0,0) 30%,rgba(0,0,0,.055) 75%,rgba(0,0,0,.13) 100%);-webkit-mask-image:linear-gradient(90deg,transparent 0,#000 50px,#000 3150px,transparent 3285px);mask-image:linear-gradient(90deg,transparent 0,#000 50px,#000 3150px,transparent 3285px)"></div>

<!-- window corners -->
<svg class="a" style="left:0;top:0" width="20" height="20"><path d="M0 0H20A20 20 0 0 0 0 20Z" fill="#1d3a52"/></svg>
<svg class="a" style="left:3820px;top:0" width="20" height="20"><path d="M20 0H0A20 20 0 0 1 20 20Z" fill="#5a4630"/></svg>
<svg class="a" style="left:0;top:1978px" width="20" height="20"><path d="M0 20H20A20 20 0 0 1 0 0Z" fill="#12293b"/></svg>
<svg class="a" style="left:3820px;top:1978px" width="20" height="20"><path d="M20 20H0A20 20 0 0 0 20 0Z" fill="#4a2a12"/></svg>
</body></html>
